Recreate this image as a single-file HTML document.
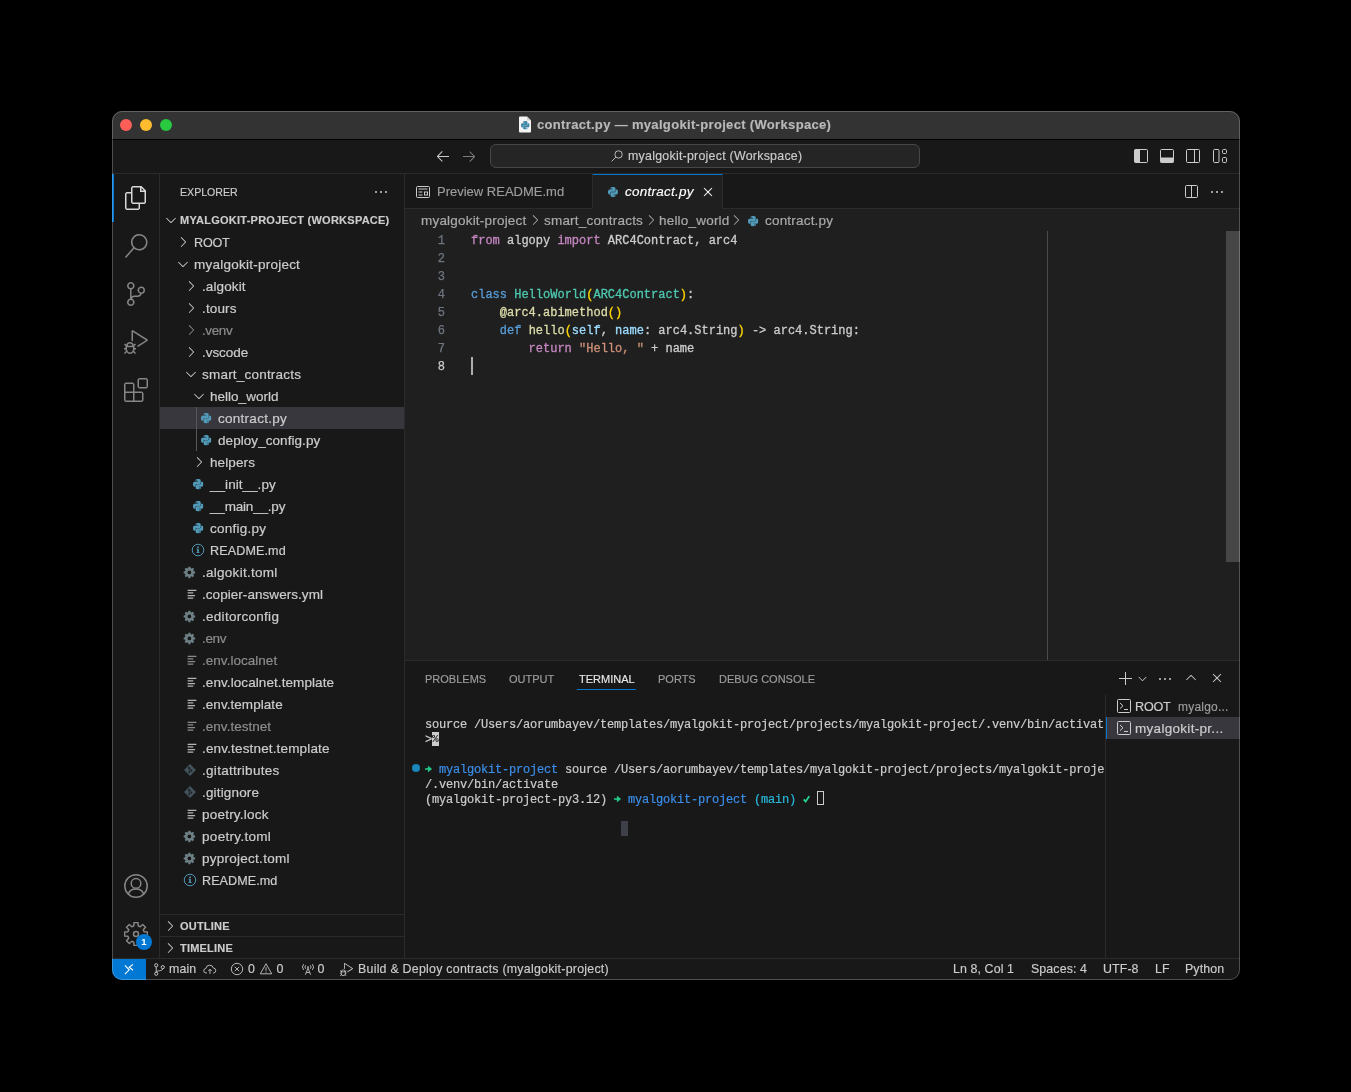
<!DOCTYPE html>
<html>
<head>
<meta charset="utf-8">
<title>contract.py</title>
<style>
*{box-sizing:border-box;margin:0;padding:0}
html,body{width:1351px;height:1092px;background:#000;overflow:hidden}
body{font-family:"Liberation Sans",sans-serif;font-size:13px;color:#ccc;position:relative}
#win{position:absolute;left:112px;top:111px;width:1128px;height:869px;border-radius:10px;overflow:hidden;background:#181818}
#o{will-change:transform;position:absolute;left:-112px;top:-111px;width:1351px;height:1092px}
#frame{position:absolute;left:112px;top:111px;width:1128px;height:869px;border-radius:10px;border:1px solid rgba(255,255,255,0.230);pointer-events:none;z-index:50}
.a{position:absolute}
.t{-webkit-text-stroke:0.150px;position:absolute;white-space:nowrap;line-height:24px;height:24px}
.tr{color:#ccc;font-size:13.5px;letter-spacing:0.2px}
.bc{font-size:13.5px;letter-spacing:0.2px}
.hl{position:absolute;background:#2b2b2b}
#titlebar{left:112px;top:111px;width:1128px;height:28px;background:#333}
.tl{position:absolute;width:12px;height:12px;border-radius:50%;top:119px}
.mono{font-family:"Liberation Mono",monospace;font-size:12px}
.code{position:absolute;left:471px;white-space:pre;line-height:20px;height:20px;-webkit-text-stroke:0.300px;font-family:"Liberation Mono",monospace;font-size:12px;color:#ccc}
.ln{-webkit-text-stroke:0.250px;position:absolute;left:419px;width:26px;text-align:right;line-height:20px;height:20px;color:#6e7681;font-family:"Liberation Mono",monospace;font-size:12px}
.term{position:absolute;left:425px;white-space:pre;line-height:19px;height:19px;color:#ccc;letter-spacing:-0.2px;-webkit-text-stroke:0.2px;font-family:"Liberation Mono",monospace;font-size:12px}
.dim{color:#8c8c8c}
svg{position:absolute;overflow:visible}
.k{color:#c586c0}.b{color:#569cd6}.c{color:#4ec9b0}.y{color:#ffd700}.f{color:#dcdcaa}.v{color:#9cdcfe}.s{color:#ce9178}
.sb{position:absolute;white-space:nowrap;line-height:22px;height:22px;top:958px;font-size:12.400px;letter-spacing:0.100px;color:#ccc;-webkit-text-stroke:0.150px}
.ar{display:inline-block;width:7px;overflow:visible;letter-spacing:0}
#tclip{position:absolute;left:405px;top:696px;width:700px;height:262px;overflow:hidden}
#tclip .term{margin-left:-405px;margin-top:-696px}
.pt{line-height:22px !important;letter-spacing:0 !important}
.hd{line-height:22px !important}
.tr,.bc{-webkit-text-stroke:0.2px}
</style>
</head>
<body>
<svg width="0" height="0" style="position:absolute"><defs>
<symbol id="chev_r" viewBox="0 0 16 16"><path fill="currentColor" d="M10.072 8.024L5.715 3.667l.618-.62L11 7.716v.618L6.333 13l-.618-.619 4.357-4.357z"/></symbol>
<symbol id="chev_d" viewBox="0 0 16 16"><path fill="currentColor" d="M7.976 10.072l4.357-4.357.62.618L8.284 11h-.618L3 6.333l.619-.618 4.357 4.357z"/></symbol>
<symbol id="chev_u" viewBox="0 0 16 16"><path fill="currentColor" d="M8.024 5.928l-4.357 4.357-.62-.618L7.716 5h.618L13 9.667l-.619.618-4.357-4.357z"/></symbol>
<symbol id="close" viewBox="0 0 16 16"><path fill="currentColor" d="M8 8.707l3.646 3.647.708-.707L8.707 8l3.647-3.646-.707-.708L8 7.293 4.354 3.646l-.707.708L7.293 8l-3.646 3.646.707.708L8 8.707z"/></symbol>
<symbol id="add" viewBox="0 0 16 16"><path fill="currentColor" d="M14 7v1H8v6H7V8H1V7h6V1h1v6h6z"/></symbol>
<symbol id="ellipsis" viewBox="0 0 16 16"><path fill="currentColor" d="M4 8a1 1 0 1 1-2 0 1 1 0 0 1 2 0zm5 0a1 1 0 1 1-2 0 1 1 0 0 1 2 0zm5 0a1 1 0 1 1-2 0 1 1 0 0 1 2 0z"/></symbol>
<symbol id="arrow_l" viewBox="0 0 16 16"><path fill="currentColor" d="M7 3.093l-5 5V8.8l5 5 .707-.707-4.146-4.147H14v-1H3.56L7.708 3.8 7 3.093z"/></symbol>
<symbol id="arrow_r" viewBox="0 0 16 16"><path fill="currentColor" d="M9 13.887l5-5V8.18l-5-5-.707.707 4.146 4.147H2v1h10.44L8.292 13.18l.707.707z"/></symbol>
<symbol id="files" viewBox="0 0 24 24"><path fill="currentColor" d="M17.5 0h-9L7 1.5V6H2.5L1 7.5v15.07L2.5 24h12.07L16 22.57V18h4.7l1.3-1.43V4.5L17.5 0zm0 2.12l2.38 2.38H17.5V2.12zm-3 20.38h-12v-15H7v9.07L8.5 18h6v4.5zm6-6h-12v-15H16V6h4.5v10.5z"/></symbol>
<symbol id="search24" viewBox="0 0 24 24"><path fill="currentColor" d="M15.25 0a8.25 8.25 0 0 0-6.18 13.72L1 22.88l1.12 1 8.05-9.12A8.251 8.251 0 1 0 15.25.01V0zm0 15a6.75 6.75 0 1 1 0-13.5 6.75 6.75 0 0 1 0 13.5z"/></symbol>
<symbol id="scm" viewBox="0 0 24 24"><path fill="currentColor" d="M21.007 8.222A3.738 3.738 0 0 0 15.045 5.2a3.737 3.737 0 0 0 1.156 6.583 2.988 2.988 0 0 1-2.668 1.67h-2.99a4.456 4.456 0 0 0-2.989 1.165V7.4a3.737 3.737 0 1 0-1.494 0v9.117a3.776 3.776 0 1 0 1.816.099 2.99 2.99 0 0 1 2.668-1.667h2.99a4.484 4.484 0 0 0 4.223-3.039 3.736 3.736 0 0 0 3.25-3.687zM4.565 3.738a2.242 2.242 0 1 1 4.484 0 2.242 2.242 0 0 1-4.484 0zm4.484 16.441a2.242 2.242 0 1 1-4.484 0 2.242 2.242 0 0 1 4.484 0zm8.221-9.715a2.242 2.242 0 1 1 0-4.485 2.242 2.242 0 0 1 0 4.485z"/></symbol>
<symbol id="debug" viewBox="0 0 24 24"><path fill="currentColor" d="M10.94 13.5l-1.32 1.32a3.73 3.73 0 0 0-7.24 0L1.06 13.5 0 14.56l1.72 1.72-.22.22V18H0v1.5h1.5v.08c.077.489.214.966.41 1.42L0 22.94 1.06 24l1.65-1.65A4.308 4.308 0 0 0 6 24a4.31 4.31 0 0 0 3.29-1.65L10.94 24 12 22.94 10.09 21c.198-.464.336-.951.41-1.45v-.1H12V18h-1.5v-1.5l-.22-.22L12 14.56l-1.06-1.06zM6 13.5a2.25 2.25 0 0 1 2.25 2.25h-4.5A2.25 2.25 0 0 1 6 13.5zm3 6a3.33 3.33 0 0 1-3 3 3.33 3.33 0 0 1-3-3v-2.25h6v2.25zm14.76-9.9v1.26L13.5 17.37V15.6l8.5-5.37L9 2v9.46a5.07 5.07 0 0 0-1.5-.72V.63L8.64 0l15.12 9.6z"/></symbol>
<symbol id="ext" viewBox="0 0 24 24"><path fill="currentColor" d="M13.5 1.5L15 0h7.5L24 1.5V9l-1.5 1.5H15L13.5 9V1.5zm1.5 0V9h7.5V1.5H15zM0 15V6l1.5-1.5H9L10.5 6v7.5H18l1.5 1.5v7.5L18 24H1.5L0 22.5V15zm9-1.5V6H1.5v7.5H9zM9 15H1.5v7.5H9V15zm1.5 7.5H18V15h-7.5v7.5z"/></symbol>
<symbol id="python" viewBox="0 0 24 24"><path fill="currentColor" d="M14.25.18l.9.2.73.26.59.3.45.32.34.34.25.34.16.33.1.3.04.26.02.2-.01.13V8.5l-.05.63-.13.55-.21.46-.26.38-.3.31-.33.25-.35.19-.35.14-.33.1-.3.07-.26.04-.21.02H8.77l-.69.05-.59.14-.5.22-.41.27-.33.32-.27.35-.2.36-.15.37-.1.35-.07.32-.04.27-.02.21v3.06H3.17l-.21-.03-.28-.07-.32-.12-.35-.18-.36-.26-.36-.36-.35-.46-.32-.59-.28-.73-.21-.88-.14-1.05-.05-1.23.06-1.22.16-1.04.24-.87.32-.71.36-.57.4-.44.42-.33.42-.24.4-.16.36-.1.32-.05.24-.01h.16l.06.01h8.16v-.83H6.18l-.01-2.75-.02-.37.05-.34.11-.31.17-.28.25-.26.31-.23.38-.2.44-.18.51-.15.58-.12.64-.1.71-.06.77-.04.84-.02 1.27.05zm-6.3 1.98l-.23.33-.08.41.08.41.23.34.33.22.41.09.41-.09.33-.22.23-.34.08-.41-.08-.41-.23-.33-.33-.22-.41-.09-.41.09zm13.09 3.95l.28.06.32.12.35.18.36.27.36.35.35.47.32.59.28.73.21.88.14 1.04.05 1.23-.06 1.23-.16 1.04-.24.86-.32.71-.36.57-.4.45-.42.33-.42.24-.4.16-.36.09-.32.05-.24.02-.16-.01h-8.22v.82h5.84l.01 2.76.02.36-.05.34-.11.31-.17.29-.25.25-.31.24-.38.2-.44.17-.51.15-.58.13-.64.09-.71.07-.77.04-.84.01-1.27-.04-1.07-.14-.9-.2-.73-.25-.59-.3-.45-.33-.34-.34-.25-.34-.16-.33-.1-.3-.04-.25-.02-.2.01-.13v-5.34l.05-.64.13-.54.21-.46.26-.38.3-.32.33-.24.35-.2.35-.14.33-.1.3-.06.26-.04.21-.02.13-.01h5.84l.69-.05.59-.14.5-.21.41-.28.33-.32.27-.35.2-.36.15-.36.1-.35.07-.32.04-.28.02-.21V6.07h2.09l.14.01zm-6.47 14.25l-.23.33-.08.41.08.41.23.33.33.23.41.08.41-.08.33-.23.23-.33.08-.41-.08-.41-.23-.33-.33-.23-.41-.08-.41.08z"/></symbol>
<symbol id="gearf" viewBox="0 0 16 16"><path fill="currentColor" fill-rule="evenodd" d="M12.73 6.71 L14.21 6.92 L14.21 9.08 L12.73 9.29 L12.26 10.43 L13.15 11.62 L11.62 13.15 L10.43 12.26 L9.29 12.73 L9.08 14.21 L6.92 14.21 L6.71 12.73 L5.57 12.26 L4.38 13.15 L2.85 11.62 L3.74 10.43 L3.27 9.29 L1.79 9.08 L1.79 6.92 L3.27 6.71 L3.74 5.57 L2.85 4.38 L4.38 2.85 L5.57 3.74 L6.71 3.27 L6.92 1.79 L9.08 1.79 L9.29 3.27 L10.43 3.74 L11.62 2.85 L13.15 4.38 L12.26 5.57Z M5.95 8.00 a2.05 2.05 0 1 0 4.10 0 a2.05 2.05 0 1 0 -4.10 0Z"/></symbol>
<symbol id="gearo" viewBox="0 0 24 24"><path fill="none" stroke="currentColor" stroke-width="1.5" stroke-linejoin="round" d="M20.10 9.78 L23.43 10.01 L23.43 13.99 L20.10 14.22 L19.30 16.16 L21.49 18.67 L18.67 21.49 L16.16 19.30 L14.22 20.10 L13.99 23.43 L10.01 23.43 L9.78 20.10 L7.84 19.30 L5.33 21.49 L2.51 18.67 L4.70 16.16 L3.90 14.22 L0.57 13.99 L0.57 10.01 L3.90 9.78 L4.70 7.84 L2.51 5.33 L5.33 2.51 L7.84 4.70 L9.78 3.90 L10.01 0.57 L13.99 0.57 L14.22 3.90 L16.16 4.70 L18.67 2.51 L21.49 5.33 L19.30 7.84Z"/><circle cx="12" cy="12" r="2.500" fill="none" stroke="currentColor" stroke-width="1.500"/></symbol>
<symbol id="account" viewBox="0 0 24 24"><circle cx="12" cy="12" r="11.200" fill="none" stroke="currentColor" stroke-width="1.500"/><circle cx="12" cy="9.400" r="4.800" fill="none" stroke="currentColor" stroke-width="1.500"/><path d="M4.300 20.300c.900-3.600 3.900-5.400 7.700-5.400s6.800 1.800 7.700 5.400" fill="none" stroke="currentColor" stroke-width="1.500"/></symbol>
<symbol id="info" viewBox="0 0 16 16"><circle cx="8" cy="8" r="6.6" fill="none" stroke="currentColor" stroke-width="1.1"/><path fill="currentColor" d="M7.1 6.6h1.8v4.8h-1.8zM7.1 3.9h1.8v1.7h-1.8zM6.3 6.6h1.2v.9H6.3zM6.3 10.6h3.4v.9H6.3z"/></symbol>
<symbol id="lines" viewBox="0 0 16 16"><path fill="currentColor" d="M3 3h10v1.5H3zM3 6h6.5v1.5H3zM3 9h8.5v1.5H3zM3 12h6.5v1.5H3z"/></symbol>
<symbol id="git" viewBox="0 0 16 16"><path fill="currentColor" fill-rule="evenodd" d="M8 1.2L14.8 8 8 14.8 1.2 8zM6.3 4.8a1 1 0 1 0 1.2 1.5l1.6 1.5v.1a1 1 0 1 0 .8-.1L8.200 6.1V6a1 1 0 0 0-.2-.7L6.7 4zM6.7 6.5v3.2a1 1 0 1 0 .8 0V6.700z"/></symbol>
<symbol id="term" viewBox="0 0 16 16"><rect x="1.500" y="1.500" width="13" height="13" rx="1" fill="none" stroke="currentColor"/><path d="M4 5l3 2.800-3 2.800M8 11.500h4" fill="none" stroke="currentColor"/></symbol>
<symbol id="split" viewBox="0 0 16 16"><rect x="2.500" y="1.500" width="12" height="12" rx="1" fill="none" stroke="currentColor"/><path d="M8.500 1.500v12" stroke="currentColor"/></symbol>
<symbol id="lay_left" viewBox="0 0 16 16"><rect x="1.500" y="1.500" width="13" height="13" rx="1" fill="none" stroke="currentColor"/><rect x="1.500" y="1.500" width="5.500" height="13" fill="currentColor"/></symbol>
<symbol id="lay_panel" viewBox="0 0 16 16"><rect x="1.500" y="1.500" width="13" height="13" rx="1" fill="none" stroke="currentColor"/><rect x="1.500" y="9.500" width="13" height="5" fill="currentColor"/></symbol>
<symbol id="lay_right" viewBox="0 0 16 16"><rect x="1.500" y="1.500" width="13" height="13" rx="1" fill="none" stroke="currentColor"/><path d="M9.500 1.500v13" stroke="currentColor"/></symbol>
<symbol id="lay_cust" viewBox="0 0 16 16"><rect x="1.500" y="1.500" width="5.500" height="13" rx="1" fill="none" stroke="currentColor"/><rect x="10.500" y="1.500" width="4" height="4" rx="1" fill="none" stroke="currentColor"/><rect x="10.500" y="9.500" width="4" height="5" rx="1" fill="none" stroke="currentColor"/></symbol>
<symbol id="preview" viewBox="0 0 16 16"><rect x="1.5" y="2.500" width="13" height="11" rx="1" fill="none" stroke="currentColor"/><path d="M3.500 5h9M3.500 8h4M3.500 11h4" stroke="currentColor" fill="none"/><rect x="9.500" y="8" width="3" height="3" fill="none" stroke="currentColor"/></symbol>
<symbol id="search16" viewBox="0 0 16 16"><circle cx="9.800" cy="6.200" r="4.200" fill="none" stroke="currentColor"/><path d="M6.800 9.200L1.800 14.2" stroke="currentColor"/></symbol>
<symbol id="remote" viewBox="0 0 16 16"><path d="M3.900 4.400L8.200 8.800 3.900 13.200M12 3.400L8.200 6.300 12 9.200" fill="none" stroke="currentColor" stroke-width="1.100"/></symbol>
<symbol id="branch" viewBox="0 0 16 16"><circle cx="4.500" cy="3.500" r="1.700" fill="none" stroke="currentColor"/><circle cx="4.500" cy="12.5" r="1.700" fill="none" stroke="currentColor"/><circle cx="11.5" cy="5.500" r="1.700" fill="none" stroke="currentColor"/><path d="M4.500 5.200v5.600M11.5 7.200c0 2.800-7 1.500-7 4" fill="none" stroke="currentColor"/></symbol>
<symbol id="cloudup" viewBox="0 0 16 16"><path d="M4.500 12.5h-1a2.500 2.500 0 0 1-.3-5 4.500 4.500 0 0 1 8.800-.5 2.800 2.800 0 0 1 .5 5.500h-1" fill="none" stroke="currentColor"/><path d="M8 13.500V8.500M6 10.300l2-2 2 2" fill="none" stroke="currentColor"/></symbol>
<symbol id="error" viewBox="0 0 16 16"><circle cx="8" cy="8" r="6.500" fill="none" stroke="currentColor"/><path d="M5.500 5.500l5 5M10.5 5.500l-5 5" stroke="currentColor"/></symbol>
<symbol id="warn" viewBox="0 0 16 16"><path d="M8 2L14.500 13.500h-13z" fill="none" stroke="currentColor" stroke-linejoin="round"/><path d="M8 6v4M8 11v1.200" stroke="currentColor"/></symbol>
<symbol id="radio" viewBox="0 0 16 16"><path d="M8 7L5 14.500M8 7l3 7.500M6 12h4M3 2.500a5 5 0 0 0 0 6.500M13 2.500a5 5 0 0 1 0 6.500M5.300 3.800a3 3 0 0 0 0 3.900M10.700 3.800a3 3 0 0 1 0 3.900" fill="none" stroke="currentColor"/><circle cx="8" cy="5.800" r="1" fill="currentColor"/></symbol>
</defs></svg>
<div id="win"><div id="o">
<div class="a" id="titlebar"></div>
<div class="a" style="left:112px;top:139px;width:1128px;height:1px;background:#000"></div>
<div class="tl" style="left:120px;background:#ff5f57"></div>
<div class="tl" style="left:140px;background:#febc2e"></div>
<div class="tl" style="left:160px;background:#28c840"></div>
<svg class="a" style="left:519px;top:115.500px" width="12" height="17" viewBox="0 0 12 17"><path d="M1 0.500h7l4 4v11a1 1 0 0 1-1 1h-10a1 1 0 0 1-1-1v-14a1 1 0 0 1 1-1z" fill="#f4f4f4"/><path d="M8 0.500v4h4z" fill="#cfcfcf"/></svg>
<svg class="a" style="left:520.8px;top:121.3px;color:#3a86a8;" width="8.6" height="8.6"><use href="#python"/></svg><div class="t hd" id="title" style="left:537px;top:114px;font-weight:bold;color:#b9b9b9;font-size:13px;letter-spacing:0.330px">contract.py — myalgokit-project (Workspace)</div>
<div class="a" style="left:112px;top:140px;width:1128px;height:33px;background:#181818"></div>
<div class="hl" style="left:112px;top:173px;width:1128px;height:1px"></div>
<svg class="a" style="left:434.5px;top:148px;color:#ccc;" width="16" height="16"><use href="#arrow_l"/></svg><svg class="a" style="left:460.5px;top:148px;color:#7a7a7a;" width="16" height="16"><use href="#arrow_r"/></svg><div class="a" id="cc" style="left:490px;top:144px;width:430px;height:24px;border:1px solid #474747;border-radius:6px;background:#252525"></div>
<svg class="a" style="left:610px;top:148.5px;color:#ccc;" width="14" height="14"><use href="#search16"/></svg><div class="t hd" id="cctext" style="left:628px;top:145px;font-size:12.400px;color:#ccc;letter-spacing:0.250px">myalgokit-project (Workspace)</div>
<svg class="a" style="left:1133px;top:148px;color:#ccc;" width="16" height="16"><use href="#lay_left"/></svg><svg class="a" style="left:1159px;top:148px;color:#ccc;" width="16" height="16"><use href="#lay_panel"/></svg><svg class="a" style="left:1185px;top:148px;color:#ccc;" width="16" height="16"><use href="#lay_right"/></svg><svg class="a" style="left:1212px;top:148px;color:#ccc;" width="16" height="16"><use href="#lay_cust"/></svg><div class="hl" style="left:159px;top:174px;width:1px;height:784px"></div>
<div class="a" style="left:112px;top:174px;width:2px;height:48px;background:#0078d4"></div>
<svg class="a" style="left:124px;top:186px;color:#d7d7d7;" width="24" height="24"><use href="#files"/></svg><svg class="a" style="left:124px;top:234px;color:#868686;" width="24" height="24"><use href="#search24"/></svg><svg class="a" style="left:124px;top:282px;color:#868686;" width="24" height="24"><use href="#scm"/></svg><svg class="a" style="left:124px;top:330px;color:#868686;" width="24" height="24"><use href="#debug"/></svg><svg class="a" style="left:124px;top:378px;color:#868686;" width="24" height="24"><use href="#ext"/></svg><svg class="a" style="left:124px;top:874px;color:#868686;" width="24" height="24"><use href="#account"/></svg><svg class="a" style="left:124px;top:922px;color:#868686;" width="24" height="24"><use href="#gearo"/></svg><div class="a" style="left:136px;top:934px;width:16px;height:16px;border-radius:8px;background:#0078d4;color:#fff;font-size:9.500px;font-weight:bold;text-align:center;line-height:16px">1</div>
<div class="hl" style="left:404px;top:174px;width:1px;height:784px"></div>
<div class="t hd" style="left:180px;top:181px;font-size:10.600px;color:#ccc;letter-spacing:0px">EXPLORER</div>
<svg class="a" style="left:373px;top:184px;color:#ccc;" width="16" height="16"><use href="#ellipsis"/></svg><svg class="a" style="left:163px;top:212px;color:#ccc;" width="16" height="16"><use href="#chev_d"/></svg><div class="t hd" style="left:180px;top:209px;font-size:11px;font-weight:bold;color:#ccc;letter-spacing:0.250px" id="wshdr">MYALGOKIT-PROJECT (WORKSPACE)</div>
<svg class="a" style="left:175px;top:234px;color:#ccc;" width="16" height="16"><use href="#chev_r"/></svg><div class="t tr" style="left:194px;top:231px;font-size:12.600px;letter-spacing:-0.20px">ROOT</div>
<svg class="a" style="left:175px;top:256px;color:#ccc;" width="16" height="16"><use href="#chev_d"/></svg><div class="t tr" style="left:194px;top:253px;letter-spacing:0.24px">myalgokit-project</div>
<svg class="a" style="left:183px;top:278px;color:#ccc;" width="16" height="16"><use href="#chev_r"/></svg><div class="t tr" style="left:202px;top:275px;letter-spacing:0.11px">.algokit</div>
<svg class="a" style="left:183px;top:300px;color:#ccc;" width="16" height="16"><use href="#chev_r"/></svg><div class="t tr" style="left:202px;top:297px;letter-spacing:0.14px">.tours</div>
<svg class="a" style="left:183px;top:322px;color:#8c8c8c;" width="16" height="16"><use href="#chev_r"/></svg><div class="t tr dim" style="left:202px;top:319px;letter-spacing:-0.38px">.venv</div>
<svg class="a" style="left:183px;top:344px;color:#ccc;" width="16" height="16"><use href="#chev_r"/></svg><div class="t tr" style="left:202px;top:341px;letter-spacing:-0.06px">.vscode</div>
<svg class="a" style="left:183px;top:366px;color:#ccc;" width="16" height="16"><use href="#chev_d"/></svg><div class="t tr" style="left:202px;top:363px;letter-spacing:0.21px">smart_contracts</div>
<svg class="a" style="left:191px;top:388px;color:#ccc;" width="16" height="16"><use href="#chev_d"/></svg><div class="t tr" style="left:210px;top:385px;letter-spacing:0.02px">hello_world</div>
<div class="a" style="left:160px;top:407px;width:244px;height:22px;background:#37373d"></div>
<svg class="a" style="left:200.7px;top:413.3px;color:#519aba;" width="10.4" height="10.4"><use href="#python"/></svg><div class="t tr" style="left:218px;top:407px;letter-spacing:0.27px">contract.py</div>
<svg class="a" style="left:200.7px;top:435.3px;color:#519aba;" width="10.4" height="10.4"><use href="#python"/></svg><div class="t tr" style="left:218px;top:429px;letter-spacing:0.06px">deploy_config.py</div>
<svg class="a" style="left:191px;top:454px;color:#ccc;" width="16" height="16"><use href="#chev_r"/></svg><div class="t tr" style="left:210px;top:451px;letter-spacing:0.10px">helpers</div>
<svg class="a" style="left:192.7px;top:479.3px;color:#519aba;" width="10.4" height="10.4"><use href="#python"/></svg><div class="t tr" style="left:210px;top:473px;letter-spacing:0.04px">__init__.py</div>
<svg class="a" style="left:192.7px;top:501.3px;color:#519aba;" width="10.4" height="10.4"><use href="#python"/></svg><div class="t tr" style="left:210px;top:495px;letter-spacing:-0.19px">__main__.py</div>
<svg class="a" style="left:192.7px;top:523.3px;color:#519aba;" width="10.4" height="10.4"><use href="#python"/></svg><div class="t tr" style="left:210px;top:517px;letter-spacing:0.24px">config.py</div>
<svg class="a" style="left:190.8px;top:543px;color:#519aba;" width="14" height="14"><use href="#info"/></svg><div class="t tr" style="left:210px;top:539px;font-size:12.600px;letter-spacing:0.10px">README.md</div>
<svg class="a" style="left:181.85px;top:564.8px;color:#6d8086;" width="14.8" height="14.8"><use href="#gearf"/></svg><div class="t tr" style="left:202px;top:561px;letter-spacing:0.27px">.algokit.toml</div>
<svg class="a" style="left:185.3px;top:587px;color:#b4b4b4;" width="14" height="14"><use href="#lines"/></svg><div class="t tr" style="left:202px;top:583px;letter-spacing:0.05px">.copier-answers.yml</div>
<svg class="a" style="left:181.85px;top:608.8px;color:#6d8086;" width="14.8" height="14.8"><use href="#gearf"/></svg><div class="t tr" style="left:202px;top:605px;letter-spacing:0.28px">.editorconfig</div>
<svg class="a" style="left:181.85px;top:630.8px;color:#6d8086;" width="14.8" height="14.8"><use href="#gearf"/></svg><div class="t tr dim" style="left:202px;top:627px;letter-spacing:-0.34px">.env</div>
<svg class="a" style="left:185.3px;top:653px;color:#8a8a8a;" width="14" height="14"><use href="#lines"/></svg><div class="t tr dim" style="left:202px;top:649px;letter-spacing:0.03px">.env.localnet</div>
<svg class="a" style="left:185.3px;top:675px;color:#b4b4b4;" width="14" height="14"><use href="#lines"/></svg><div class="t tr" style="left:202px;top:671px;letter-spacing:0.08px">.env.localnet.template</div>
<svg class="a" style="left:185.3px;top:697px;color:#b4b4b4;" width="14" height="14"><use href="#lines"/></svg><div class="t tr" style="left:202px;top:693px;letter-spacing:0.05px">.env.template</div>
<svg class="a" style="left:185.3px;top:719px;color:#8a8a8a;" width="14" height="14"><use href="#lines"/></svg><div class="t tr dim" style="left:202px;top:715px;letter-spacing:0.03px">.env.testnet</div>
<svg class="a" style="left:185.3px;top:741px;color:#b4b4b4;" width="14" height="14"><use href="#lines"/></svg><div class="t tr" style="left:202px;top:737px;letter-spacing:0.16px">.env.testnet.template</div>
<svg class="a" style="left:182.5px;top:763px;color:#41535b;" width="14" height="14"><use href="#git"/></svg><div class="t tr" style="left:202px;top:759px;letter-spacing:0.29px">.gitattributes</div>
<svg class="a" style="left:182.5px;top:785px;color:#41535b;" width="14" height="14"><use href="#git"/></svg><div class="t tr" style="left:202px;top:781px;letter-spacing:0.16px">.gitignore</div>
<svg class="a" style="left:185.3px;top:807px;color:#b4b4b4;" width="14" height="14"><use href="#lines"/></svg><div class="t tr" style="left:202px;top:803px;letter-spacing:0.22px">poetry.lock</div>
<svg class="a" style="left:181.85px;top:828.8px;color:#6d8086;" width="14.8" height="14.8"><use href="#gearf"/></svg><div class="t tr" style="left:202px;top:825px;letter-spacing:0.31px">poetry.toml</div>
<svg class="a" style="left:181.85px;top:850.8px;color:#6d8086;" width="14.8" height="14.8"><use href="#gearf"/></svg><div class="t tr" style="left:202px;top:847px;letter-spacing:0.26px">pyproject.toml</div>
<svg class="a" style="left:182.8px;top:873px;color:#519aba;" width="14" height="14"><use href="#info"/></svg><div class="t tr" style="left:202px;top:869px;font-size:12.600px;letter-spacing:0.06px">README.md</div>
<div class="a" style="left:196px;top:407px;width:1px;height:44px;background:#585858"></div>
<div class="hl" style="left:160px;top:914px;width:244px;height:1px"></div>
<svg class="a" style="left:162px;top:918px;color:#ccc;" width="16" height="16"><use href="#chev_r"/></svg><div class="t hd" style="left:180px;top:915px;font-size:11px;font-weight:bold;letter-spacing:0.2px">OUTLINE</div>
<div class="hl" style="left:160px;top:936px;width:244px;height:1px"></div>
<svg class="a" style="left:162px;top:940px;color:#ccc;" width="16" height="16"><use href="#chev_r"/></svg><div class="t hd" style="left:180px;top:937px;font-size:11px;font-weight:bold;letter-spacing:0.2px">TIMELINE</div>
<div class="a" style="left:405px;top:174px;width:835px;height:486px;background:#1f1f1f"></div>
<div class="a" style="left:405px;top:174px;width:835px;height:35px;background:#181818"></div>
<div class="hl" style="left:405px;top:208px;width:835px;height:1px"></div>
<div class="a" id="tab1r" style="left:592px;top:174px;width:1px;height:35px;background:#2b2b2b"></div>
<div class="a" id="tabact" style="left:593px;top:174px;width:130px;height:35px;background:#1f1f1f;border-top:1px solid #0078d4;border-right:1px solid #2b2b2b"></div>
<svg class="a" style="left:415px;top:184px;color:#ccc;" width="16" height="16"><use href="#preview"/></svg><div class="t" style="left:437px;top:180px;color:#9d9d9d" id="tab1">Preview README.md</div>
<svg class="a" style="left:607.5px;top:186.5px;color:#519aba;" width="10" height="10"><use href="#python"/></svg><div class="t" style="left:625px;top:180px;color:#fff;font-style:italic;font-size:13.500px;letter-spacing:0.250px" id="tab2">contract.py</div>
<svg class="a" style="left:700px;top:184px;color:#fff;" width="16" height="16"><use href="#close"/></svg><svg class="a" style="left:1183px;top:184px;color:#ccc;" width="16" height="16"><use href="#split"/></svg><svg class="a" style="left:1209px;top:183.5px;color:#ccc;" width="16" height="16"><use href="#ellipsis"/></svg><div class="t bc" style="left:421px;top:209px;color:#a9a9a9">myalgokit-project</div>
<div class="t bc" style="left:544px;top:209px;color:#a9a9a9">smart_contracts</div>
<div class="t bc" style="left:659px;top:209px;color:#a9a9a9">hello_world</div>
<svg class="a" style="left:527px;top:212px;color:#a9a9a9;" width="16" height="16"><use href="#chev_r"/></svg><svg class="a" style="left:643px;top:212px;color:#a9a9a9;" width="16" height="16"><use href="#chev_r"/></svg><svg class="a" style="left:728px;top:212px;color:#a9a9a9;" width="16" height="16"><use href="#chev_r"/></svg><svg class="a" style="left:747.8px;top:215.5px;color:#519aba;" width="10.4" height="10.4"><use href="#python"/></svg><div class="t bc" style="left:765px;top:209px;color:#a9a9a9">contract.py</div>
<div class="ln" style="top:231px">1</div><div class="code" style="top:231px"><span class="k">from</span> algopy <span class="k">import</span> ARC4Contract, arc4</div>
<div class="ln" style="top:249px">2</div><div class="code" style="top:249px"></div>
<div class="ln" style="top:267px">3</div><div class="code" style="top:267px"></div>
<div class="ln" style="top:285px">4</div><div class="code" style="top:285px"><span class="b">class</span> <span class="c">HelloWorld</span><span class="y">(</span><span class="c">ARC4Contract</span><span class="y">)</span>:</div>
<div class="ln" style="top:303px">5</div><div class="code" style="top:303px">    <span class="f">@arc4.abimethod</span><span class="y">()</span></div>
<div class="ln" style="top:321px">6</div><div class="code" style="top:321px">    <span class="b">def</span> <span class="f">hello</span><span class="y">(</span><span class="v">self</span>, <span class="v">name</span>: arc4.String<span class="y">)</span> -&gt; arc4.String:</div>
<div class="ln" style="top:339px">7</div><div class="code" style="top:339px">        <span class="k">return</span> <span class="s">"Hello, "</span> + name</div>
<div class="ln" style="top:357px;color:#ccc">8</div><div class="code" style="top:357px"></div>
<div class="a" style="left:471px;top:357px;width:1.5px;height:18px;background:#aeafad"></div>
<div class="a" style="left:1047px;top:231px;width:1px;height:429px;background:#4b4b4b"></div>
<div class="a" style="left:1226px;top:231px;width:14px;height:331px;background:#464646"></div>
<div class="hl" style="left:405px;top:660px;width:835px;height:1px"></div>
<div class="a" style="left:405px;top:661px;width:835px;height:297px;background:#181818"></div>
<div class="t pt" style="left:425px;top:668px;font-size:11px;letter-spacing:0.2px;color:#9d9d9d">PROBLEMS</div>
<div class="t pt" style="left:509px;top:668px;font-size:11px;letter-spacing:0.2px;color:#9d9d9d">OUTPUT</div>
<div class="t pt" style="left:579px;top:668px;font-size:11px;letter-spacing:0.2px;color:#e7e7e7">TERMINAL</div>
<div class="t pt" style="left:658px;top:668px;font-size:11px;letter-spacing:0.2px;color:#9d9d9d">PORTS</div>
<div class="t pt" style="left:719px;top:668px;font-size:11px;letter-spacing:0.2px;color:#9d9d9d">DEBUG CONSOLE</div>
<div class="a" id="tul" style="left:577px;top:689px;width:59px;height:1px;background:#0078d4"></div>
<svg class="a" style="left:1118px;top:670.7px;color:#ccc;" width="16" height="16"><use href="#add"/></svg><svg class="a" style="left:1135.5px;top:672px;color:#ccc;" width="13" height="13"><use href="#chev_d"/></svg><svg class="a" style="left:1157px;top:670.5px;color:#ccc;" width="16" height="16"><use href="#ellipsis"/></svg><svg class="a" style="left:1183px;top:670px;color:#ccc;" width="16" height="16"><use href="#chev_u"/></svg><svg class="a" style="left:1209px;top:670px;color:#ccc;" width="16" height="16"><use href="#close"/></svg><div id="tclip"><div class="term" style="top:716px;left:425px">source /Users/aorumbayev/templates/myalgokit-project/projects/myalgokit-project/.venv/bin/activat</div>
<div class="term" style="top:731px;left:425px">&gt;</div>
<div class="term" style="top:761px;left:425px"><span class="ar"><svg width="7" height="8" viewBox="0 0 7 8" style="position:static;vertical-align:0.500px;color:#23d18b"><path d="M0.700 4h3" stroke="currentColor" stroke-width="1.700" stroke-linecap="round" fill="none"/><path d="M3.300 1.300L6.600 4 3.300 6.700z" fill="currentColor" stroke="currentColor" stroke-width="0.700" stroke-linejoin="round"/></svg></span> <span style="color:#3b8eea">myalgokit-project</span> source /Users/aorumbayev/templates/myalgokit-project/projects/myalgokit-proje</div>
<div class="term" style="top:776px;left:425px">/.venv/bin/activate</div>
<div class="term" style="top:791px;left:425px">(myalgokit-project-py3.12) <span class="ar"><svg width="7" height="8" viewBox="0 0 7 8" style="position:static;vertical-align:0.500px;color:#23d18b"><path d="M0.700 4h3" stroke="currentColor" stroke-width="1.700" stroke-linecap="round" fill="none"/><path d="M3.300 1.300L6.600 4 3.300 6.700z" fill="currentColor" stroke="currentColor" stroke-width="0.700" stroke-linejoin="round"/></svg></span> <span style="color:#3b8eea">myalgokit-project</span> <span style="color:#29b8db">(main)</span> <span class="ar"><svg width="7" height="8" viewBox="0 0 7 8" style="position:static;vertical-align:0.500px;color:#23d18b"><path d="M0.700 4.400L2.600 6.500 6.300 1.200" stroke="currentColor" stroke-width="1.800" fill="none"/></svg></span> </div>
</div>
<div class="a" style="left:412px;top:764px;width:8px;height:8px;border-radius:4px;background:#1a85b8"></div>
<div class="a mono" style="left:432px;top:732px;width:7px;height:14px;background:#ccc;color:#181818;font-size:11px;line-height:15px;font-weight:bold;letter-spacing:-0.5px;overflow:hidden">%</div>
<div class="a" style="left:817px;top:791px;width:7px;height:14px;border:1px solid #ccc"></div>
<div class="a" style="left:621px;top:821px;width:7px;height:15px;background:#3e4048"></div>
<div class="hl" style="left:1105px;top:695px;width:1px;height:263px"></div>
<div class="a" style="left:1106px;top:717px;width:134px;height:22px;background:#37373d"></div>
<div class="a" style="left:1106px;top:717px;width:1px;height:22px;background:#0078d4"></div>
<svg class="a" style="left:1116px;top:698px;color:#ccc;" width="16" height="16"><use href="#term"/></svg><div class="t tr" style="left:1135px;top:695px;color:#ccc;font-size:12.600px;letter-spacing:-0.200px">ROOT</div>
<div class="t" style="left:1178px;top:695px;color:#9d9d9d;font-size:12px;letter-spacing:0.200px">myalgo...</div>
<svg class="a" style="left:1116px;top:720px;color:#ccc;" width="16" height="16"><use href="#term"/></svg><div class="t tr" style="left:1135px;top:717px;color:#ccc;letter-spacing:0.300px">myalgokit-pr...</div>
<div class="hl" style="left:112px;top:958px;width:1128px;height:1px"></div>
<div class="a" style="left:112px;top:959px;width:34px;height:21px;background:#0078d4"></div>
<svg class="a" style="left:121px;top:961px;color:#fff;" width="16" height="16"><use href="#remote"/></svg><svg class="a" style="left:151.8px;top:961.5px;color:#ccc;" width="15" height="15"><use href="#branch"/></svg><div class="sb" style="left:169px">main</div>
<svg class="a" style="left:203px;top:962px;color:#ccc;" width="14" height="14"><use href="#cloudup"/></svg><svg class="a" style="left:230px;top:962px;color:#ccc;" width="14" height="14"><use href="#error"/></svg><div class="sb" style="left:248px">0</div>
<svg class="a" style="left:259px;top:962px;color:#ccc;" width="14" height="14"><use href="#warn"/></svg><div class="sb" style="left:276.500px">0</div>
<svg class="a" style="left:300.5px;top:962px;color:#ccc;" width="14" height="14"><use href="#radio"/></svg><div class="sb" style="left:317.500px">0</div>
<svg class="a" style="left:340px;top:962.5px;color:#ccc;" width="13" height="13"><use href="#debug"/></svg><div class="sb" id="sbbuild" style="left:358px;letter-spacing:0.240px">Build &amp; Deploy contracts (myalgokit-project)</div>
<div class="sb sbr" style="left:953px">Ln 8, Col 1</div>
<div class="sb sbr" style="left:1031px">Spaces: 4</div>
<div class="sb sbr" style="left:1103px">UTF-8</div>
<div class="sb sbr" style="left:1155px">LF</div>
<div class="sb sbr" style="left:1185px">Python</div>
</div></div>
<div id="frame"></div>
</body>
</html>
